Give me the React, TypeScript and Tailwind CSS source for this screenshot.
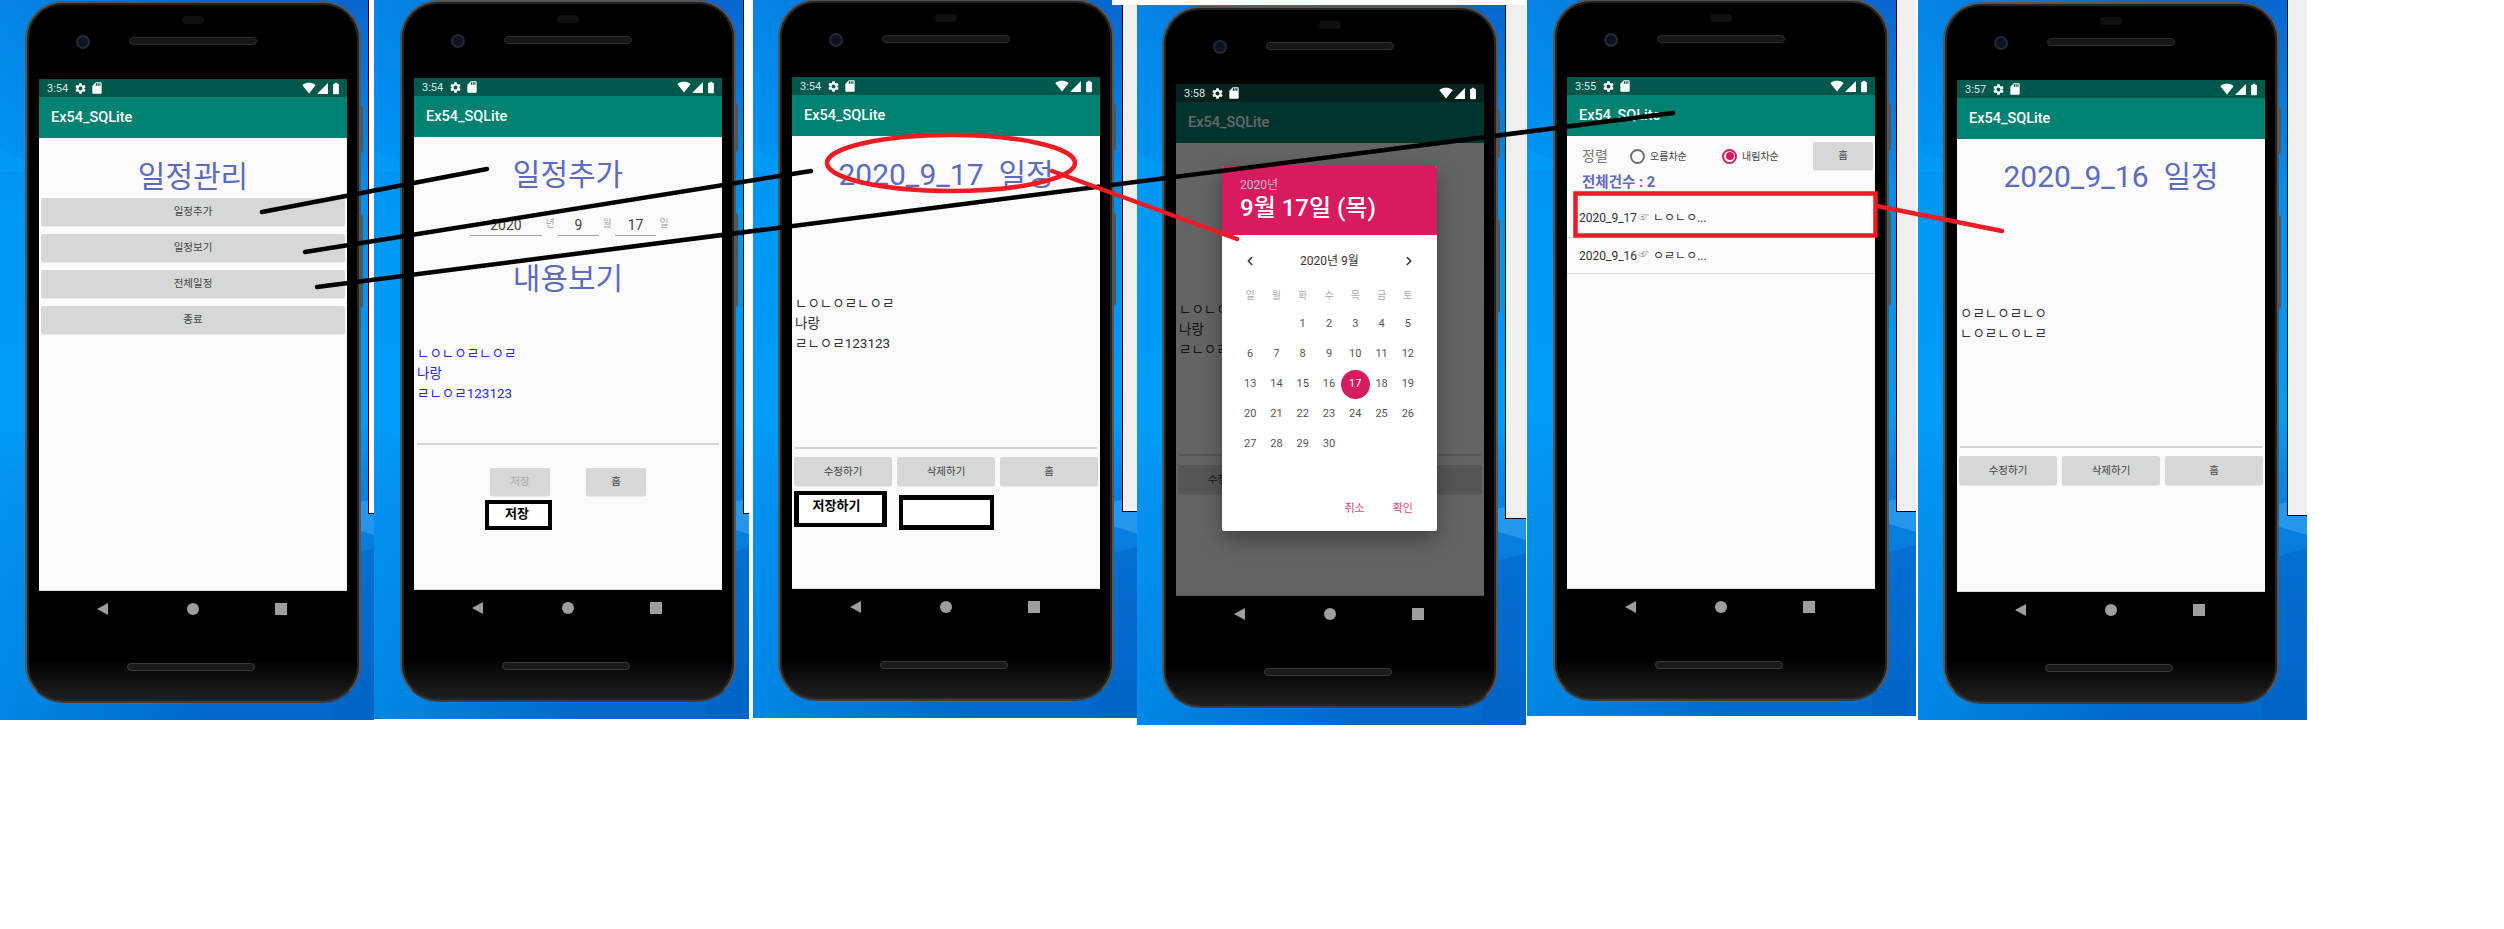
import React from "react";
import { MdSettings, MdSdStorage, MdSignalWifi4Bar, MdSignalCellular4Bar, MdBatteryFull } from "react-icons/md";
import { ChevronLeft, ChevronRight } from "lucide-react";

function Status({ time, dim }: { time: string; dim?: boolean }) {
  return (
    <div className={`h-[18px] flex items-center text-[#d9e8e4] pl-[8px] pr-[4px] ${dim ? "bg-[#04231f]" : "bg-[#00594c]"}`}>
      <span className="text-[11px] leading-none w-[25px]">{time}</span>
      <MdSettings className="w-[13px] h-[13px] text-white ml-[2px]" />
      <MdSdStorage className="w-[14px] h-[14px] text-white ml-[3px]" />
      <div className="flex-1" />
      <MdSignalWifi4Bar className="w-[14px] h-[14px] text-white" />
      <MdSignalCellular4Bar className="w-[13px] h-[13px] text-white" />
      <MdBatteryFull className="w-[14px] h-[15px] text-white" />
    </div>
  );
}

function AppBar() {
  return (
    <div className="h-[41px] bg-[#008272] flex items-center pl-[12px] shadow-[0_1px_2px_rgba(0,0,0,0.2)] relative">
      <span className="text-[14.5px] font-medium text-white">Ex54_SQLite</span>
    </div>
  );
}

function Nav() {
  return (
    <div className="h-[39px] pt-[12px] flex items-start pl-[58px]">
      <svg width="11" height="12" viewBox="0 0 11 12" className="shrink-0">
        <polygon points="11,0 11,12 0,6" fill="#9e9e9e" />
      </svg>
      <div className="w-[12px] h-[12px] rounded-full bg-[#9e9e9e] ml-[79px]" />
      <div className="w-[12px] h-[12px] bg-[#9e9e9e] ml-[76px]" />
    </div>
  );
}

function Phone({ className, children }: { className: string; children: React.ReactNode }) {
  return (
    <div className={`relative w-[336px] h-[702px] rounded-[38px] border-[2px] border-[#565656] border-b-[#3c3c3c] bg-[linear-gradient(to_bottom,#000_94%,#1c1c1c_99%)] shadow-[inset_0_0_0_2px_#232323] pt-[76px] px-[12px] ${className}`}>
      <div className="absolute left-[49px] top-[32px] w-[14px] h-[14px] rounded-full bg-[#10131f] border-[2px] border-[#23283c]" />
      <div className="absolute left-[102px] top-[34px] w-[128px] h-[8px] rounded-full bg-[#161616] border border-[#2e2e2e]" />
      <div className="absolute left-[155px] top-[13px] w-[22px] h-[8px] rounded-full bg-[#101010]" />
      <div className="absolute left-[100px] top-[660px] w-[128px] h-[8px] rounded-full bg-[#1a1a1a] border border-[#3a3a3a]" />
      <div className="absolute right-[-4px] top-[102px] w-[3px] h-[48px] rounded-r-sm bg-[#555]" />
      <div className="absolute right-[-4px] top-[211px] w-[3px] h-[94px] rounded-r-sm bg-[#555]" />
      {children}
      <Nav />
    </div>
  );
}

function Screen({ time, dim, children }: { time: string; dim?: boolean; children: React.ReactNode }) {
  return (
    <>
      <Status time={time} dim={dim} />
      <AppBar />
      <div className="h-[453px] bg-[#fafafa] border-b border-[#dcdcdc] flex flex-col relative">{children}</div>
    </>
  );
}

function Title({ children, className = "" }: { children: React.ReactNode; className?: string }) {
  return <div className={`h-[40px] pt-[2px] leading-[40px] text-center text-[30px] text-[#5c6bc0] whitespace-pre ${className}`}>{children}</div>;
}

function Btn({ children, className = "" }: { children: React.ReactNode; className?: string }) {
  return (
    <div className={`h-[29px] rounded-[2px] bg-[#d6d7d7] flex items-center justify-center text-[10.5px] text-[#444] shadow-[0_1px_1px_rgba(0,0,0,0.08)] ${className}`}>
      {children}
    </div>
  );
}

function Line({ children, className = "" }: { children: React.ReactNode; className?: string }) {
  return <div className={`h-[20px] leading-[20px] text-[13.5px] pl-[3px] whitespace-pre ${className}`}>{children}</div>;
}

function Rule({ className = "" }: { className?: string }) {
  return <div className={`h-[2px] mx-[3px] bg-[#d4d4d4] ${className}`} />;
}

function ActionRow({ className = "" }: { className?: string }) {
  return (
    <div className={`flex gap-[5px] px-[2px] ${className}`}>
      <Btn className="flex-1">수정하기</Btn>
      <Btn className="flex-1">삭제하기</Btn>
      <Btn className="flex-1">홈</Btn>
    </div>
  );
}

function Strip({ className }: { className: string }) {
  return <div className={`absolute border-l border-b border-black ${className}`} />;
}

function Wallpaper() {
  return (
    <svg className="absolute left-0 top-0 w-full h-full" viewBox="0 0 389 720" preserveAspectRatio="none">
      <polygon points="0,150 26,160 26,172 0,172" fill="#00a2fa" opacity="0.5" />
      <polygon points="345,505 389,500 389,535 345,522" fill="#3aa5f7" opacity="0.6" />
      <polygon points="345,560 389,548 389,720 345,720" fill="#0062c4" opacity="0.45" />
    </svg>
  );
}

function Dialog() {
  const heads = ["일", "월", "화", "수", "목", "금", "토"];
  const days: (number | null)[] = [null, null, ...Array.from({ length: 30 }, (_, i) => i + 1)];
  return (
    <div className="absolute left-[46px] top-[82px] w-[215px] h-[365px] bg-white rounded-[2px] shadow-[0_8px_20px_rgba(0,0,0,0.35)] flex flex-col">
      <div className="h-[69px] bg-[#d81b60] pl-[18px] pt-[11px] text-white rounded-t-[2px]">
        <div className="text-[12px] leading-[16px] text-[#f4b4cc]">2020년</div>
        <div className="text-[24px] leading-[30px] font-medium whitespace-pre">9월 17일 (목)</div>
      </div>
      <div className="h-[36px] mt-[8px] flex items-center justify-between pl-[21px] pr-[21px] text-[#333]">
        <ChevronLeft className="w-[14px] h-[14px]" strokeWidth={2.6} />
        <span className="text-[12px]">2020년 9월</span>
        <ChevronRight className="w-[14px] h-[14px]" strokeWidth={2.6} />
      </div>
      <div className="grid grid-cols-7 w-[184px] ml-[15px] mt-[6px] h-[20px] items-center text-center text-[10px] text-[#aaa]">
        {heads.map((h) => (
          <span key={h}>{h}</span>
        ))}
      </div>
      <div className="grid grid-cols-7 w-[184px] ml-[15px] mt-[4px] text-[11px] text-[#555]">
        {days.map((d, i) => (
          <div key={i} className="h-[30px] flex items-center justify-center">
            {d === 17 ? (
              <span className="w-[29px] h-[29px] shrink-0 rounded-full bg-[#d81b60] text-white flex items-center justify-center">17</span>
            ) : (
              d
            )}
          </div>
        ))}
      </div>
      <div className="mt-[40px] h-[20px] flex items-center justify-end gap-[28px] pr-[24px] text-[11px] text-[#e5417f]">
        <span>취소</span>
        <span>확인</span>
      </div>
    </div>
  );
}

function Radio({ on }: { on?: boolean }) {
  return on ? (
    <span className="w-[15px] h-[15px] rounded-full border-[2px] border-[#d81b60] flex items-center justify-center">
      <span className="w-[8px] h-[8px] rounded-full bg-[#d81b60]" />
    </span>
  ) : (
    <span className="block w-[15px] h-[15px] rounded-full border-[2px] border-[#707070]" />
  );
}

const panelClass =
  "absolute bg-[linear-gradient(to_right,rgba(0,160,250,0.55),transparent_55%),linear-gradient(to_bottom,#0a66d0_0%,#0090ee_28%,#009cf6_58%,#0a86e4_66%,#0068cb_100%)] overflow-hidden";

export default function App() {
  return (
    <div className="relative w-[2504px] h-[929px] bg-white overflow-hidden font-[Roboto,'Noto_Sans_CJK_KR',sans-serif]">
      {/* Panel 1 */}
      <div className={`${panelClass} left-0 top-0 w-[374px] h-[720px]`}>
        <Wallpaper />
        <Strip className="left-[368px] top-0 w-[6px] h-[514px] bg-white" />
        <Phone className="ml-[25px] mt-[1px]">
          <Screen time="3:54">
            <Title className="mt-[17px]">일정관리</Title>
            <div className="mt-[3px] px-[2px] flex flex-col gap-[8px]">
              <Btn className="!h-[28px]">일정추가</Btn>
              <Btn className="!h-[28px]">일정보기</Btn>
              <Btn className="!h-[28px]">전체일정</Btn>
              <Btn className="!h-[28px]">종료</Btn>
            </div>
          </Screen>
        </Phone>
      </div>

      {/* Panel 2 */}
      <div className={`${panelClass} left-[374px] top-0 w-[375px] h-[719px]`}>
        <Wallpaper />
        <Strip className="left-[369px] top-0 w-[6px] h-[514px] bg-white" />
        <Phone className="ml-[26px]">
          <Screen time="3:54">
            <Title className="mt-[16px]">일정추가</Title>
            <div className="mt-[22px] h-[21px] pl-[56px] flex items-start text-[#444]">
              <div className="w-[72px] h-[21px] border-b border-[#a0a0a0] text-center text-[14px] leading-[20px]">2020</div>
              <div className="w-[16px] text-center text-[10px] leading-[18px] text-[#aaa]">년</div>
              <div className="w-[41px] h-[21px] border-b border-[#a0a0a0] text-center text-[14px] leading-[20px]">9</div>
              <div className="w-[16px] text-center text-[10px] leading-[18px] text-[#aaa]">월</div>
              <div className="w-[41px] h-[21px] border-b border-[#a0a0a0] text-center text-[14px] leading-[20px]">17</div>
              <div className="w-[16px] text-center text-[10px] leading-[18px] text-[#aaa]">일</div>
            </div>
            <Title className="mt-[21px]">내용보기</Title>
            <div className="mt-[46px] text-[#2a2aee]">
              <Line>ㄴㅇㄴㅇㄹㄴㅇㄹ</Line>
              <Line>나랑</Line>
              <Line>ㄹㄴㅇㄹ123123</Line>
            </div>
            <Rule className="mt-[40px]" />
            <div className="mt-[23px] pl-[76px] flex gap-[36px]">
              <Btn className="w-[60px] !h-[28px] !text-[#aaa]">저장</Btn>
              <Btn className="w-[60px] !h-[28px]">홈</Btn>
            </div>
            <div className="absolute left-[71px] top-[363px] w-[67px] h-[30px] border-[4px] border-black bg-white flex items-center justify-center pr-[3px] pb-[2px] text-[13px] font-bold text-black">
              저장
            </div>
          </Screen>
        </Phone>
      </div>

      {/* Panel 3 */}
      <div className={`${panelClass} left-[753px] top-0 w-[384px] h-[718px]`}>
        <Wallpaper />
        <Strip className="left-[369px] top-[5px] w-[15px] h-[507px] bg-[#efefef]" />
        <div className="absolute left-[359px] top-0 w-[25px] h-[5px] bg-white" />
        <Phone className="ml-[25px] -mt-[1px]">
          <Screen time="3:54">
            <Title className="mt-[17px]">{"2020_9_17  일정"}</Title>
            <div className="mt-[100px] text-[#333]">
              <Line>ㄴㅇㄴㅇㄹㄴㅇㄹ</Line>
              <Line>나랑</Line>
              <Line>ㄹㄴㅇㄹ123123</Line>
            </div>
            <Rule className="mt-[94px]" />
            <ActionRow className="mt-[8px]" />
            <div className="absolute left-[2px] top-[355px] w-[93px] h-[36px] border-y-[4px] border-x-[5px] border-black bg-white flex items-start justify-center pr-[8px] pt-[1px] text-[13px] font-bold text-black">
              저장하기
            </div>
            <div className="absolute left-[107px] top-[359px] w-[95px] h-[35px] border-y-[5px] border-x-[4px] border-black bg-white" />
          </Screen>
        </Phone>
      </div>

      {/* Panel 4 */}
      <div className={`${panelClass} left-[1137px] top-[5px] w-[389px] h-[720px]`}>
        <Wallpaper />
        <Strip className="left-[368px] top-0 w-[21px] h-[514px] bg-[#efefef]" />
        <Phone className="ml-[25px] mt-[1px]">
          <div className="relative">
            <Screen time="3:58" dim>
              <div className="mt-[156px] text-[#333]">
                <Line>ㄴㅇㄴㅇㄹㄴㅇㄹ</Line>
                <Line>나랑</Line>
                <Line>ㄹㄴㅇㄹ123123</Line>
              </div>
              <Rule className="mt-[95px]" />
              <ActionRow className="mt-[9px]" />
            </Screen>
            <div className="absolute left-0 right-0 top-[18px] bottom-0 bg-black/60" />
            <Dialog />
          </div>
        </Phone>
      </div>

      {/* Panel 5 */}
      <div className={`${panelClass} left-[1527px] top-0 w-[389px] h-[716px]`}>
        <Wallpaper />
        <Strip className="left-[369px] top-0 w-[20px] h-[512px] bg-[#efefef]" />
        <Phone className="ml-[26px] -mt-[1px]">
          <Screen time="3:55">
            <div className="mt-[6px] h-[28px] pl-[15px] flex items-center">
              <span className="text-[14px] text-[#777] w-[27px] whitespace-nowrap">정렬</span>
              <span className="ml-[21px] shrink-0"><Radio /></span>
              <span className="ml-[5px] w-[38px] text-[10px] text-[#444] whitespace-nowrap">오름차순</span>
              <span className="ml-[34px] shrink-0"><Radio on /></span>
              <span className="ml-[5px] w-[38px] text-[10px] text-[#444] whitespace-nowrap">내림차순</span>
              <Btn className="ml-[33px] w-[60px] !h-[28px]">홈</Btn>
            </div>
            <div className="mt-[3px] h-[20px] pl-[15px] text-[14.5px] leading-[20px] font-bold text-[#5c6bc0]">전체건수 : 2</div>
            <div className="h-[45px] pt-[6px] border-b border-[#dedede] flex items-center pl-[12px] text-[12px] text-[#333] whitespace-pre">
              2020_9_17<span className="text-[#999] text-[11px] mx-[1px]">☞</span> ㄴㅇㄴㅇ...
            </div>
            <div className="h-[36px] border-b border-[#dedede] flex items-center pl-[12px] text-[12px] text-[#333] whitespace-pre">
              2020_9_16<span className="text-[#999] text-[11px] mx-[1px]">☞</span> ㅇㄹㄴㅇ...
            </div>
          </Screen>
        </Phone>
      </div>

      {/* Panel 6 */}
      <div className={`${panelClass} left-[1918px] top-0 w-[389px] h-[720px]`}>
        <Wallpaper />
        <Strip className="left-[369px] top-0 w-[20px] h-[516px] bg-[#efefef]" />
        <Phone className="ml-[25px] mt-[2px]">
          <Screen time="3:57">
            <Title className="mt-[16px]">{"2020_9_16  일정"}</Title>
            <div className="mt-[108px] text-[#333]">
              <Line>ㅇㄹㄴㅇㄹㄴㅇ</Line>
              <Line>ㄴㅇㄹㄴㅇㄴㄹ</Line>
            </div>
            <Rule className="mt-[103px]" />
            <ActionRow className="mt-[8px]" />
          </Screen>
        </Phone>
      </div>

      {/* Annotations */}
      <svg className="absolute left-0 top-0 pointer-events-none" width="2504" height="929" fill="none" strokeLinecap="round">
        <line x1="262" y1="212" x2="487" y2="169" stroke="#000" strokeWidth="4.5" />
        <line x1="305" y1="252" x2="811" y2="171" stroke="#000" strokeWidth="4.5" />
        <line x1="317" y1="287" x2="1673" y2="113" stroke="#000" strokeWidth="4.5" />
        <ellipse cx="951" cy="163" rx="124" ry="28" stroke="#ed1c24" strokeWidth="4.5" />
        <line x1="1052" y1="171" x2="1237" y2="239" stroke="#ed1c24" strokeWidth="4.5" />
        <rect x="1575.5" y="193.5" width="300" height="42" stroke="#ed1c24" strokeWidth="4.5" />
        <line x1="1877" y1="206" x2="2002" y2="231" stroke="#ed1c24" strokeWidth="4.5" />
      </svg>
    </div>
  );
}
